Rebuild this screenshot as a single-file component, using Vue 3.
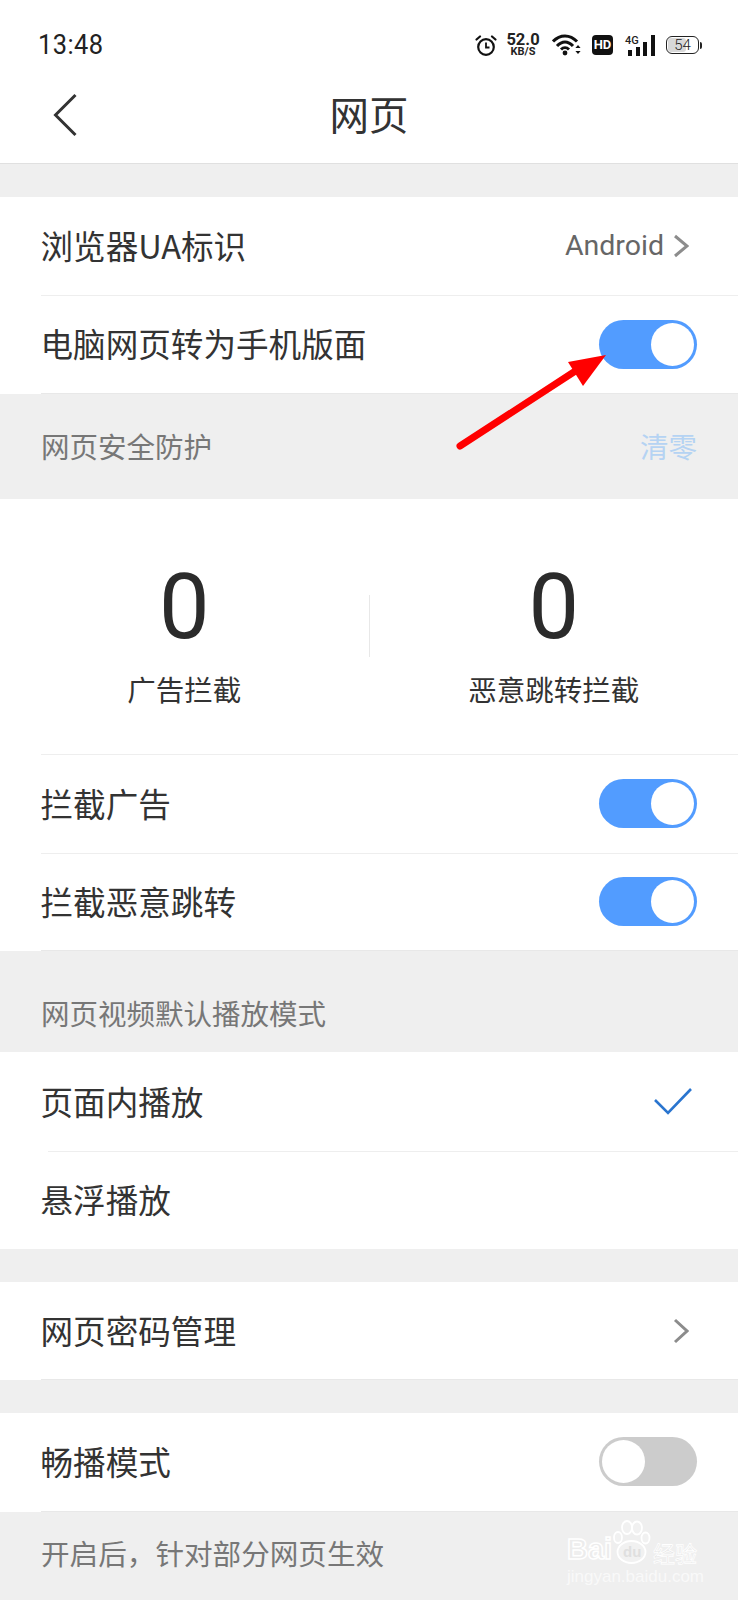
<template>
  <div class="page">
    <div class="status">
      <span class="time">13:48</span>
      <div class="status-icons">
        <svg class="alarm" width="22" height="21" viewBox="0 0 22 21" fill="none" stroke="#111" stroke-width="2.2">
          <circle cx="11" cy="12" r="7.8" />
          <path d="M11 7.5v5h3.5" stroke-width="1.8" />
          <path d="M1.5 4.5L5 1.5M20.5 4.5L17 1.5" stroke-linecap="round" />
        </svg>
        <div class="speed">
          <span class="speed-num">52.0</span>
          <span class="speed-unit">KB/S</span>
        </div>
        <svg class="wifi" width="30" height="22" viewBox="0 0 30 22" fill="none" stroke="#111" stroke-width="3">
          <path d="M1 7.5C8 0 18 0 25 7.5" />
          <path d="M5 12C10 6.5 16 6.5 21 12" />
          <path d="M9 15.5C11.5 13 14.5 13 17 15.5" />
          <circle cx="13" cy="19" r="2.4" fill="#111" stroke="none" />
          <path d="M26 11l-2.6 3h5.2zM26 20l-2.6-3h5.2z" fill="#111" stroke="none" />
        </svg>
        <span class="hd">HD</span>
        <div class="signal">
          <span class="net">4G</span>
          <i class="b1"></i><i class="b2"></i><i class="b3"></i><i class="b4"></i>
        </div>
        <div class="battery"><span class="battery-fill"></span><span class="battery-num">54</span></div>
        <span class="battery-nub"></span>
      </div>
    </div>

    <header class="nav">
      <svg class="back" width="26" height="44" viewBox="0 0 26 44" fill="none" stroke="#333" stroke-width="3">
        <path d="M22.5 2L2.5 22L22.5 42" />
      </svg>
      <h1>网页</h1>
    </header>

    <div class="gap"></div>

    <section class="group">
      <div class="row">
        <span class="name">浏览器UA标识</span>
        <div class="value">
          <span>Android</span>
          <svg width="16" height="24" viewBox="0 0 16 24" fill="none" stroke="#8c8c8c" stroke-width="3"><path d="M2 2l12 10L2 22" /></svg>
        </div>
      </div>
      <div class="row end">
        <span class="name">电脑网页转为手机版面</span>
        <div class="switch on"><i></i></div>
      </div>
    </section>

    <div class="section-title safe">
      <span>网页安全防护</span>
      <span class="clear">清零</span>
    </div>

    <section class="group">
      <div class="stats">
        <div class="stat">
          <div class="num">0</div>
          <div class="label">广告拦截</div>
        </div>
        <div class="stat-line"></div>
        <div class="stat">
          <div class="num">0</div>
          <div class="label">恶意跳转拦截</div>
        </div>
      </div>
      <div class="row line">
        <span class="name">拦截广告</span>
        <div class="switch on"><i></i></div>
      </div>
      <div class="row end">
        <span class="name">拦截恶意跳转</span>
        <div class="switch on"><i></i></div>
      </div>
    </section>

    <div class="section-title video"><span>网页视频默认播放模式</span></div>

    <section class="group">
      <div class="row">
        <span class="name">页面内播放</span>
        <svg class="check" width="38" height="28" viewBox="0 0 38 28" fill="none" stroke="#2a75cf" stroke-width="2.6"><path d="M1 12l13 13L37 1" /></svg>
      </div>
      <div class="row inset">
        <span class="name">悬浮播放</span>
      </div>
    </section>

    <div class="gap"></div>

    <section class="group">
      <div class="row end">
        <span class="name">网页密码管理</span>
        <svg class="chevron" width="16" height="26" viewBox="0 0 16 26" fill="none" stroke="#8c8c8c" stroke-width="3"><path d="M2 2l12 11L2 24" /></svg>
      </div>
    </section>

    <div class="gap"></div>

    <section class="group">
      <div class="row end">
        <span class="name">畅播模式</span>
        <div class="switch"><i></i></div>
      </div>
    </section>

    <div class="note">开启后，针对部分网页生效</div>

    <!-- red annotation arrow on top of the screenshot -->
    <svg class="arrow" width="738" height="500" viewBox="0 0 738 500">
      <path d="M460 446L580 368" stroke="#f00" stroke-width="7" stroke-linecap="round" />
      <path d="M606 355L568 362L583 386Z" fill="#f00" />
    </svg>

    <div class="watermark">
      <svg class="paw" width="38" height="46" viewBox="0 0 38 46" fill="#f1f1f1" stroke="#fff" stroke-width="1.8">
        <ellipse cx="14" cy="7.5" rx="5" ry="6.5" />
        <ellipse cx="24" cy="8" rx="5" ry="6.5" />
        <ellipse cx="5" cy="17.5" rx="4" ry="5.5" />
        <ellipse cx="32.5" cy="18" rx="4" ry="5.5" />
        <ellipse cx="18.5" cy="32" rx="14" ry="11" />
      </svg>
      <span class="wm-bai">Bai</span>
      <span class="wm-du">du</span>
      <span class="wm-cn">经验</span>
      <span class="wm-url">jingyan.baidu.com</span>
    </div>
  </div>
</template>

<script setup>
</script>

<style>
html,
body {
  margin: 0;
  background: #efefef;
}
</style>

<style scoped>
.page {
  position: relative;
  width: 738px;
  height: 1600px;
  overflow: hidden;
  background: #efefef;
  color: #333;
  font-family: "Noto Sans CJK SC", "Noto Sans", sans-serif;
}

.status {
  height: 70px;
  box-sizing: border-box;
  padding: 20px 36px 0 38px;
  background: #fff;
  display: flex;
  align-items: center;
  justify-content: space-between;
}

.time {
  font-family: Roboto, sans-serif;
  font-size: 27px;
  line-height: 30px;
  letter-spacing: 0.5px;
  color: #222;
  transform: scaleX(0.94);
  transform-origin: left center;
}

.status-icons {
  display: flex;
  align-items: center;
}

.speed {
  display: flex;
  flex-direction: column;
  align-items: center;
  margin-left: 9px;
  width: 34px;
  font-family: Roboto, sans-serif;
  font-weight: 700;
  color: #222;
}

.speed-num {
  font-size: 16.5px;
  line-height: 14px;
}

.speed-unit {
  font-size: 11px;
  line-height: 10px;
}

.wifi {
  margin-left: 12px;
}

.hd {
  margin-left: 10px;
  width: 21px;
  height: 20px;
  border-radius: 4px;
  background: #111;
  color: #fff;
  font-family: Roboto, sans-serif;
  font-size: 13px;
  font-weight: 700;
  line-height: 20px;
  text-align: center;
}

.signal {
  position: relative;
  margin-left: 12px;
  width: 30px;
  height: 21px;
}

.net {
  position: absolute;
  left: 0;
  top: -1px;
  font-family: Roboto, sans-serif;
  font-size: 11px;
  font-weight: 500;
  color: #222;
}

.signal i {
  position: absolute;
  bottom: 0;
  width: 4px;
  background: #111;
}

.b1 { left: 3px; height: 6px; }
.b2 { left: 11px; height: 9px; }
.b3 { left: 18px; height: 14px; }
.b4 { left: 26px; height: 21px; }

.battery {
  position: relative;
  margin-left: 11px;
  width: 31px;
  height: 16px;
  border: 1.5px solid #222;
  border-radius: 6px;
  overflow: hidden;
  text-align: center;
  font-family: Roboto, sans-serif;
  font-size: 15px;
  font-weight: 300;
  line-height: 16px;
  color: #222;
}

.battery-fill {
  position: absolute;
  left: 1px;
  top: 1px;
  bottom: 1px;
  width: 58%;
  background: #d8d8d8;
  border-radius: 3px;
}

.battery-num {
  position: relative;
}

.battery-nub {
  width: 2px;
  height: 7px;
  margin-left: 1px;
  border-radius: 0 2px 2px 0;
  background: #222;
}

.nav {
  position: relative;
  height: 93px;
  background: #fff;
  border-bottom: 1px solid #e0e0e0;
  display: flex;
  align-items: center;
  justify-content: center;
}

.nav h1 {
  margin: 0 0 8px;
  font-size: 39.5px;
  font-weight: 400;
  color: #333;
}

.back {
  position: absolute;
  left: 53px;
  top: 23px;
}

.gap {
  height: 32.8px;
}

.group {
  background: #fff;
}

.row {
  height: 98.4px;
  box-sizing: border-box;
  margin-left: 41px;
  padding-right: 41px;
  display: flex;
  align-items: center;
  justify-content: space-between;
  font-size: 32.6px;
  color: #333;
}

.name {
  margin: -3px 0 0 -0.5px;
}

.row + .row,
.row.line {
  border-top: 1px solid #eee;
}

.row.inset {
  margin-left: 0;
  padding-left: 41px;
  border-top: 0;
  background: linear-gradient(#eee, #eee) 48px 0 / 100% 1px no-repeat;
}

.row.end {
  border-bottom: 1px solid #e8e8e8;
}

.value {
  display: flex;
  align-items: center;
  gap: 9px;
  margin-right: 8px;
  font-family: Roboto, sans-serif;
  font-size: 28.5px;
  color: #666;
}

.chevron {
  margin-right: 8px;
}

.switch {
  width: 98px;
  height: 49px;
  box-sizing: border-box;
  padding: 3px;
  border-radius: 25px;
  background: #ccc;
  display: flex;
}

.switch i {
  width: 43px;
  height: 43px;
  border-radius: 50%;
  background: #fff;
}

.switch.on {
  background: #529cff;
  justify-content: flex-end;
}

.section-title {
  box-sizing: border-box;
  padding: 0 41px;
  display: flex;
  justify-content: space-between;
  align-items: center;
  font-size: 28.5px;
  color: #777;
}

.safe {
  height: 105px;
  padding-bottom: 2px;
}

.video {
  height: 101.4px;
  padding-top: 22px;
}

.clear {
  color: #b5d3f3;
}

.stats {
  height: 255.6px;
  padding-top: 8px;
  box-sizing: border-box;
  display: flex;
  align-items: center;
}

.stat {
  flex: 1;
  text-align: center;
}

.num {
  font-family: Roboto, sans-serif;
  font-size: 90px;
  line-height: 112px;
  color: #2b2b2b;
}

.label {
  margin-top: 5px;
  font-size: 28.5px;
  line-height: 40px;
  color: #333;
}

.stat-line {
  width: 1px;
  height: 62px;
  margin-bottom: 8px;
  background: #e8e8e8;
}

.check {
  margin-right: 5px;
}

.note {
  padding: 17px 41px 0;
  font-size: 28.6px;
  line-height: 48px;
  color: #777;
}

.arrow {
  position: absolute;
  left: 0;
  top: 0;
  pointer-events: none;
}

.watermark {
  position: absolute;
  left: 567px;
  top: 1520px;
  width: 135px;
  height: 64px;
}

.paw {
  position: absolute;
  left: 46px;
  top: 0;
}

.wm-bai {
  position: absolute;
  left: 0;
  top: 11px;
  font-family: "Liberation Sans", sans-serif;
  font-size: 29px;
  font-weight: 700;
  line-height: 36px;
  color: #ececec;
  -webkit-text-stroke: 1.5px #fff;
}

.wm-du {
  position: absolute;
  left: 56px;
  top: 24px;
  font-family: "Liberation Sans", sans-serif;
  font-size: 15px;
  font-weight: 700;
  line-height: 16px;
  color: #dfdfdf;
}

.wm-cn {
  position: absolute;
  left: 86px;
  top: 17px;
  font-size: 22px;
  line-height: 30px;
  white-space: nowrap;
  color: #e4e4e4;
  -webkit-text-stroke: 0.8px #fff;
}

.wm-url {
  position: absolute;
  left: 0;
  top: 49px;
  font-family: "Liberation Sans", sans-serif;
  font-size: 17px;
  line-height: 16px;
  white-space: nowrap;
  color: #f9f9f9;
}
</style>
